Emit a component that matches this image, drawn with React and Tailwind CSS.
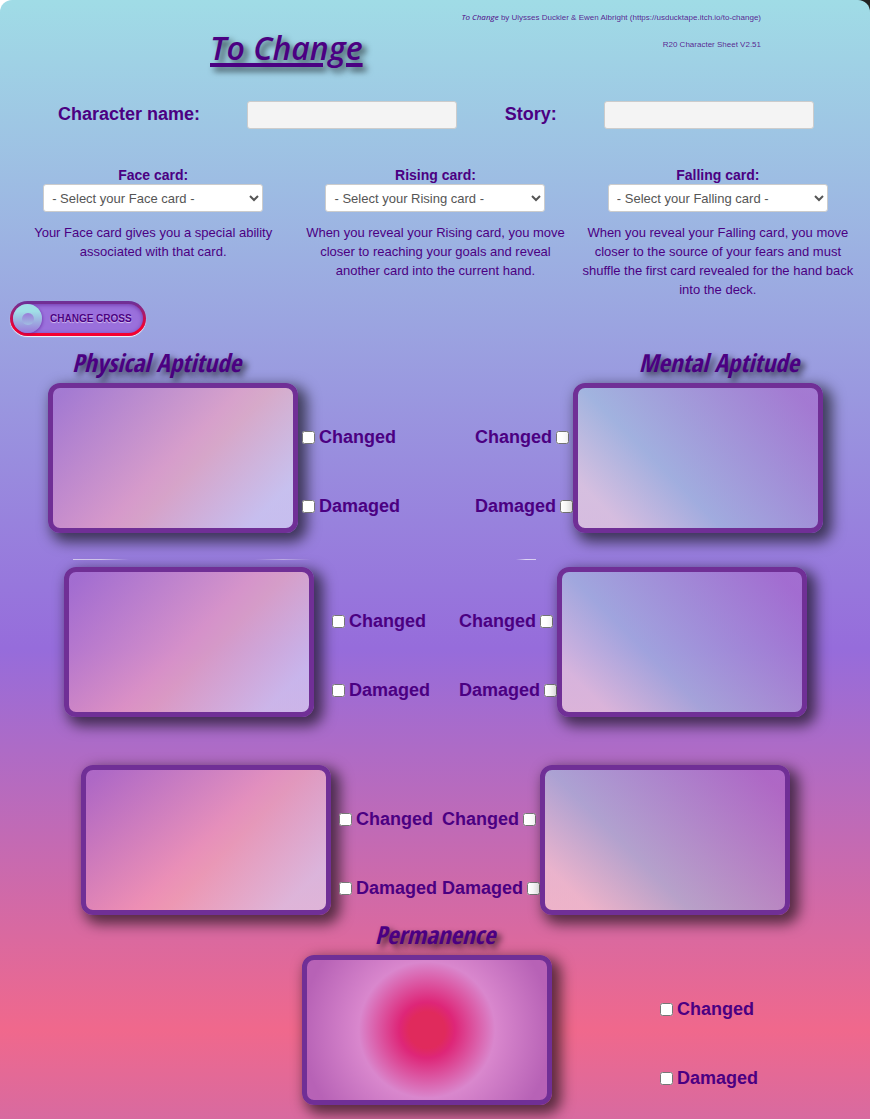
import React from "react";

const cards = [
  {
    name: "Face",
    text: "Your Face card gives you a special ability associated with that card.",
  },
  {
    name: "Rising",
    text: "When you reveal your Rising card, you move closer to reaching your goals and reveal another card into the current hand.",
  },
  {
    name: "Falling",
    text: "When you reveal your Falling card, you move closer to the source of your fears and must shuffle the first card revealed for the hand back into the deck.",
  },
];

const physicalFill =
  "bg-[linear-gradient(135deg,rgba(170,102,201,0.6)_4%,rgba(255,168,190,0.6)_50%,rgba(255,182,187,0.6)_58%,rgba(230,230,250,0.6)_88%)]";
const mentalFill =
  "bg-[linear-gradient(45deg,rgba(255,228,225,0.6)_12%,rgba(166,198,223,0.6)_38%,rgba(170,102,201,0.6)_93%)]";
const permanenceFill =
  "bg-[radial-gradient(circle,#e02a5c_13%,#de2678_20%,#d987cd_49%,#b762b6_90%)]";

function CardBox({ label, fill }) {
  return (
    <textarea
      aria-label={label}
      className={`block h-[150px] w-[250px] shrink-0 resize-none rounded-xl border-5 border-[#702f96] bg-origin-padding p-2 text-sm shadow-[6px_6px_14px_3px_rgba(0,0,0,0.6)] outline-none ${fill}`}
    />
  );
}

function Check({ children, boxFirst }) {
  const box = (
    <input
      type="checkbox"
      className="m-0 h-[13px] w-[13px] shrink-0"
    />
  );
  return (
    <label className="flex items-center gap-1 text-lg leading-6 font-bold">
      {boxFirst && box}
      <span>{children}</span>
      {!boxFirst && box}
    </label>
  );
}

function Checks({ boxFirst }) {
  return (
    <div className="flex flex-col gap-[45px] pt-[42px]">
      <Check boxFirst={boxFirst}>Changed</Check>
      <Check boxFirst={boxFirst}>Damaged</Check>
    </div>
  );
}

function AptitudeRow({ row, className, leftGap }) {
  return (
    <div className={`flex justify-between ${className}`}>
      <div className={`flex ${leftGap}`}>
        <CardBox label={`Physical Aptitude ${row}`} fill={physicalFill} />
        <Checks boxFirst />
      </div>
      <div className="flex">
        <Checks />
        <CardBox label={`Mental Aptitude ${row}`} fill={mentalFill} />
      </div>
    </div>
  );
}

function Heading({ children }) {
  return (
    <h2 className="pb-1 font-['Open_Sans_Condensed','Roboto_Condensed','Noto_Sans_Condensed',Roboto,sans-serif] text-[25px] leading-[34px] font-bold italic [text-shadow:4px_4px_6px_rgba(0,0,0,0.7)]">
      {children}
    </h2>
  );
}

export default function App() {
  return (
    <div className="bg-[linear-gradient(to_right,#ffffff_50%,#222222_50%)] font-['Liberation_Sans',Arial,sans-serif] text-[#4b0082]">
      <main className="min-h-screen rounded-t-[12px] bg-[linear-gradient(#a0dce6_0%,#966cdb_58%,#f0688c_92%,#d86aa0_100%)] pb-[14px]">
        <header className="flex h-[101px] justify-between pr-[109px] pl-[210px]">
          <h1 className="pt-6 font-['Open_Sans',sans-serif] text-[32px] leading-[48px] font-semibold italic underline decoration-4 underline-offset-3 [text-shadow:4px_4px_6px_rgba(0,0,0,0.7)]">
            To Change
          </h1>
          <div className="flex flex-col gap-[15px] pt-[11px] text-right text-[8px] leading-3 text-[#4b0082]/85">
            <p>
              <em className="font-['Open_Sans',sans-serif] text-[#4b0082]">
                To Change
              </em>{" "}
              by Ulysses Duckler &amp; Ewen Albright
              (https://usducktape.itch.io/to-change)
            </p>
            <p>R20 Character Sheet V2.51</p>
          </div>
        </header>

        <section className="flex items-start justify-between pr-14 pl-[58px] text-lg leading-[26px] font-bold">
          <label htmlFor="character-name">Character name:</label>
          <input
            id="character-name"
            type="text"
            className="h-7 w-[210px] rounded-[3px] border border-[#cccccc] bg-[#f4f4f4] px-2 text-sm font-normal"
          />
          <label htmlFor="story">Story:</label>
          <input
            id="story"
            type="text"
            className="h-7 w-[210px] rounded-[3px] border border-[#cccccc] bg-[#f4f4f4] px-2 text-sm font-normal"
          />
        </section>

        <section className="mt-[37px] grid h-[135px] grid-cols-3 pr-[11px] pl-3">
          {cards.map((card) => (
            <div key={card.name} className="flex flex-col items-center px-1">
              <label
                htmlFor={`${card.name}-card`}
                className="text-sm leading-[18px] font-bold"
              >
                {card.name} card:
              </label>
              <select
                id={`${card.name}-card`}
                className="h-7 w-[220px] rounded-[3px] border border-[#cccccc] bg-white px-1 text-[13px] text-[#555555]"
              >
                <option>- Select your {card.name} card -</option>
              </select>
              <p className="mt-[11px] text-center text-[13px] leading-[19px]">
                {card.text}
              </p>
            </div>
          ))}
        </section>

        <button
          type="button"
          className="ml-[10px] flex h-[35px] w-[136px] items-center rounded-full bg-[linear-gradient(#702f96_5%,#f5002f_75%)] p-[3px] shadow-[0_1px_1px_rgba(255,255,255,0.9)]"
        >
          <span className="flex h-full w-full items-center gap-2 rounded-full bg-[#9a70dc] shadow-[inset_0_1px_4px_rgba(75,0,130,0.5)]">
            <span className="flex h-[29px] w-[29px] items-center justify-center rounded-full bg-[linear-gradient(#a0dfe6_25%,#9a78da)] shadow-[1px_1px_3px_rgba(75,0,130,0.4)]">
              <span className="h-3 w-3 rounded-full bg-[linear-gradient(#9a7cd8,#a0bee2)]" />
            </span>
            <span className="text-[10px] leading-3 font-bold whitespace-nowrap [text-shadow:0_1px_1px_rgba(255,255,255,0.6)]">
              CHANGE CROSS
            </span>
          </span>
        </button>

        <section className="mt-[9px]">
          <div className="flex justify-between pr-[71px] pl-[72px]">
            <Heading>Physical Aptitude</Heading>
            <Heading>Mental Aptitude</Heading>
          </div>
          <AptitudeRow row={1} className="pr-[47px] pl-12" leftGap="gap-1" />
          <div className="flex h-[34px] pt-[26px] pl-[73px]">
            <span className="h-px w-14 bg-linear-to-r from-white/60 via-white/60 to-transparent" />
            <span className="ml-[126px] h-px w-14 bg-linear-to-r from-transparent via-white/40 to-transparent" />
            <span className="ml-[205px] h-px w-5 bg-linear-to-r from-transparent via-white/70 to-white/60" />
          </div>
          <AptitudeRow
            row={2}
            className="pr-[63px] pl-16"
            leftGap="gap-[18px]"
          />
          <AptitudeRow
            row={3}
            className="mt-12 pr-20 pl-[81px]"
            leftGap="gap-2"
          />
        </section>

        <section className="mt-[2px]">
          <div className="flex justify-center">
            <Heading>Permanence</Heading>
          </div>
          <div className="flex gap-[108px] pl-[302px]">
            <CardBox label="Permanence" fill={permanenceFill} />
            <Checks boxFirst />
          </div>
        </section>
      </main>
    </div>
  );
}
